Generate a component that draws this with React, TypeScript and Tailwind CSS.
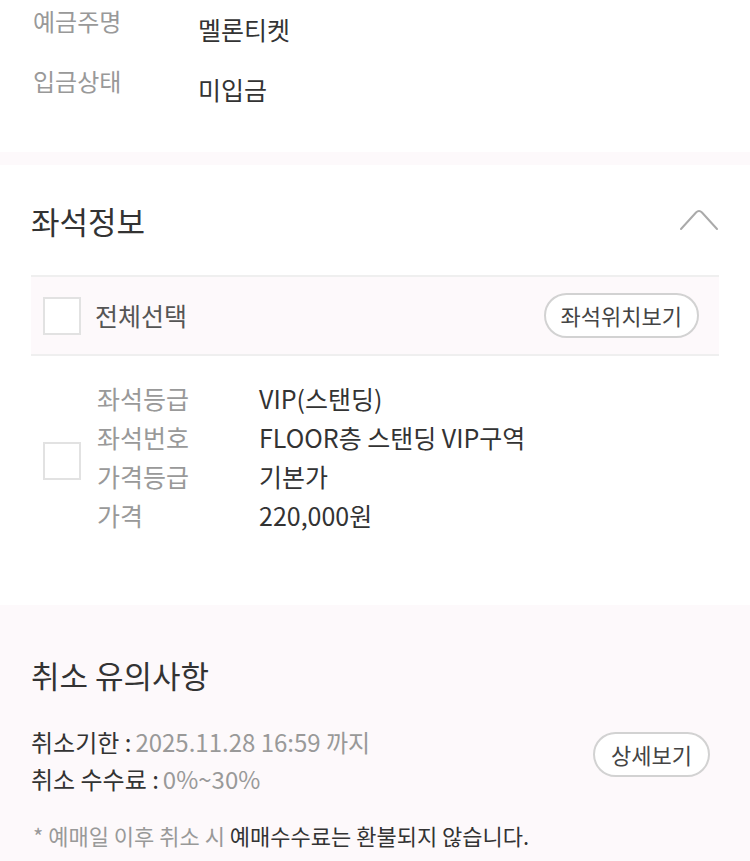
import React from 'react';

const FONT = { fontFamily: '"Noto Sans CJK KR", "Noto Sans", sans-serif' };

const seatRows = [
  { label: '좌석등급', value: 'VIP(스탠딩)' },
  { label: '좌석번호', value: 'FLOOR층 스탠딩 VIP구역' },
  { label: '가격등급', value: '기본가' },
  { label: '가격', value: '220,000원' },
];

function Checkbox() {
  return <div className="w-[38px] h-[38px] border-2 border-[#e2e2e2] bg-white shrink-0" />;
}

export default function App() {
  return (
    <div className="w-[750px] min-h-[861px] bg-white text-[#333]" style={FONT}>
      {/* 입금 정보 */}
      <section className="px-[33px] pt-[5px] h-[152px]">
        <div className="flex h-[60px]">
          <span className="w-[165px] text-[24px] leading-[32px] text-[#999]">예금주명</span>
          <span className="pt-[8px] text-[25px] leading-[32px] text-[#333]">멜론티켓</span>
        </div>
        <div className="flex h-[60px]">
          <span className="w-[165px] text-[24px] leading-[32px] text-[#999]">입금상태</span>
          <span className="pt-[8px] text-[25px] leading-[32px] text-[#333]">미입금</span>
        </div>
      </section>

      <div className="h-[13px] bg-[#fdf9fb]" />

      {/* 좌석정보 */}
      <section className="px-[31px]">
        <div className="flex items-center justify-between h-[110px]">
          <h2 className="text-[31px] leading-none text-[#333]">좌석정보</h2>
          <svg width="38" height="22" viewBox="0 0 38 22" fill="none" className="mr-[1px]">
            <path d="M1 20 L16 3.5 Q19 0.5 22 3.5 L37 20" stroke="#aaa" strokeWidth="2" strokeLinecap="round" />
          </svg>
        </div>

        <div className="flex items-center justify-between h-[81px] bg-[#fdf9fb] border-y-2 border-[#efefef] pl-[12px] pr-[20px]">
          <div className="flex items-center gap-[14px]">
            <Checkbox />
            <span className="text-[25px] text-[#555]">전체선택</span>
          </div>
          <button className="h-[45px] px-[15px] rounded-full border-2 border-[#d2d2d2] bg-white text-[22px] text-[#444]">
            좌석위치보기
          </button>
        </div>

        <div className="flex items-center h-[249px] pl-[12px] pb-[40px]">
          <Checkbox />
          <div className="ml-[16px] flex flex-col -mt-[6px]">
            {seatRows.map((r) => (
              <div key={r.label} className="flex h-[39px] items-center">
                <span className="w-[162px] text-[25px] text-[#999]">{r.label}</span>
                <span className="text-[25px] text-[#333]">{r.value}</span>
              </div>
            ))}
          </div>
        </div>
      </section>

      {/* 취소 유의사항 */}
      <section className="bg-[#fdf9fb] px-[31px] pt-[52px] pb-[30px]">
        <h2 className="text-[31px] leading-[36px] text-[#333]">취소 유의사항</h2>
        <div className="mt-[30px] flex items-start justify-between pr-[9px]">
          <div className="flex flex-col">
            <div className="h-[37px] flex items-center text-[24px]">
              <span className="text-[#333]">취소기한 : </span>
              <span className="text-[#999] ml-[4px]">2025.11.28 16:59 까지</span>
            </div>
            <div className="h-[37px] flex items-center text-[24px]">
              <span className="text-[#333]">취소 수수료 : </span>
              <span className="text-[#999] ml-[4px]">0%~30%</span>
            </div>
          </div>
          <button className="mt-[9px] h-[45px] px-[16px] rounded-full border-2 border-[#d2d2d2] bg-white text-[22px] text-[#444]">
            상세보기
          </button>
        </div>
        <p className="mt-[22px] pl-[2px] text-[22px] leading-[32px]">
          <span className="text-[#999]">* 예매일 이후 취소 시 </span>
          <span className="text-[#333]">예매수수료는 환불되지 않습니다.</span>
        </p>
      </section>
    </div>
  );
}
